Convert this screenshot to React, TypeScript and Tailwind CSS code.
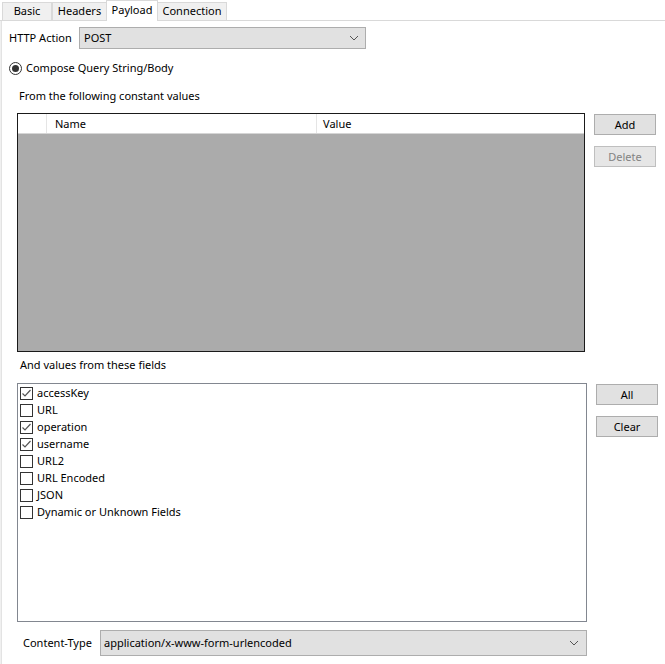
import React, { useState } from 'react';

const fields = [
  { label: 'accessKey', checked: true },
  { label: 'URL', checked: false },
  { label: 'operation', checked: true },
  { label: 'username', checked: true },
  { label: 'URL2', checked: false },
  { label: 'URL Encoded', checked: false },
  { label: 'JSON', checked: false },
  { label: 'Dynamic or Unknown Fields', checked: false },
];

const tabs = [
  { name: 'Basic', w: 'w-[50px]' },
  { name: 'Headers', w: 'w-[55px]' },
  { name: 'Payload', w: 'w-[52px]' },
  { name: 'Connection', w: 'w-[70px]' },
];

function Chevron() {
  return (
    <svg width="10" height="6" viewBox="0 0 10 6" className="shrink-0">
      <path d="M1 1 L5 5 L9 1" fill="none" stroke="#555" strokeWidth="1" />
    </svg>
  );
}

function WinButton({ label, disabled }: { label: string; disabled?: boolean }) {
  return (
    <button
      className={`w-[62px] h-[21px] border text-[11px] leading-none ${
        disabled ? 'text-[#838383] border-[#bfbfbf] bg-[#e6e6e6]' : 'text-black border-[#adadad] bg-[#e1e1e1]'
      }`}
    >
      {label}
    </button>
  );
}

function CheckBox({ checked }: { checked: boolean }) {
  return (
    <span className="w-[13px] h-[13px] border border-[#333] bg-white flex items-center justify-center shrink-0">
      {checked && (
        <svg width="11" height="11" viewBox="0 0 11 11">
          <path d="M1.5 5.5 L4 8 L9.5 2" fill="none" stroke="#555" strokeWidth="1.2" />
        </svg>
      )}
    </span>
  );
}

export default function App() {
  const [active, setActive] = useState('Payload');
  const [items, setItems] = useState(fields);

  return (
    <div
      className="w-[665px] h-[664px] bg-white text-black text-[11px] overflow-hidden flex flex-col"
      style={{ fontFamily: '"Noto Sans", "Open Sans", sans-serif' }}
    >
      {/* Tab strip */}
      <div className="flex items-end h-[20px] pl-[2px]">
        {tabs.map((t) => (
          <div
            key={t.name}
            onClick={() => setActive(t.name)}
            className={
              t.name === active
                ? `${t.w} h-[21px] -mb-[1px] bg-white border-x border-t border-[#d9d9d9] flex justify-center pt-[1px] z-10 -mx-[1px]`
                : `${t.w} h-[18px] bg-[#f0f0f0] border-x border-t border-[#d9d9d9] flex items-center justify-center`
            }
          >
            {t.name}
          </div>
        ))}
      </div>

      {/* Panel */}
      <div className="flex-1 flex border-t border-[#d9d9d9]">
        <div className="w-[2px] bg-[#f0f0f0] border-r border-[#e3e3e3]" />
        <div className="flex-1 flex flex-col pl-[7px]">
          <div className="flex items-center mt-[6px] h-[22px]">
            <span className="w-[70px]">HTTP Action</span>
            <div className="w-[287px] h-[22px] border border-[#adadad] bg-[#e1e1e1] flex items-center justify-between pl-[4px] pr-[6px]">
              <span>POST</span>
              <Chevron />
            </div>
          </div>

          <label className="flex items-center mt-[11px] h-[16px]">
            <span className="w-[13px] h-[13px] rounded-full border border-[#333] bg-white flex items-center justify-center mr-[4px]">
              <span className="w-[7px] h-[7px] rounded-full bg-[#333]" />
            </span>
            Compose Query String/Body
          </label>

          <div className="pl-[10px] mt-[12px] h-[16px] leading-[16px]">From the following constant values</div>

          <div className="flex mt-[9px] pl-[8px]">
            <div className="w-[568px] h-[239px] border border-[#1a1a1a] bg-[#ababab] flex flex-col">
              <div className="h-[20px] bg-white flex border-b border-[#d5d5d5] shrink-0">
                <div className="w-[29px] border-r border-[#e5e5e5]" />
                <div className="w-[270px] border-r border-[#e5e5e5] pl-[8px] flex items-center pt-[2px]">Name</div>
                <div className="flex-1 pl-[6px] flex items-center pt-[2px]">Value</div>
              </div>
            </div>
            <div className="flex flex-col gap-[11px] ml-[9px] mt-[1px]">
              <WinButton label="Add" />
              <WinButton label="Delete" disabled />
            </div>
          </div>

          <div className="pl-[11px] mt-[5px] h-[16px] leading-[16px]">And values from these fields</div>

          <div className="flex mt-[10px] pl-[8px]">
            <div className="w-[570px] h-[239px] border border-[#828790] bg-white pt-[1px] pl-[2px]">
              {items.map((f, i) => (
                <div
                  key={f.label}
                  className="h-[17px] flex items-center gap-[4px]"
                  onClick={() =>
                    setItems(items.map((x, j) => (j === i ? { ...x, checked: !x.checked } : x)))
                  }
                >
                  <CheckBox checked={f.checked} />
                  <span>{f.label}</span>
                </div>
              ))}
            </div>
            <div className="flex flex-col gap-[11px] ml-[9px] mt-[1px]">
              <WinButton label="All" />
              <WinButton label="Clear" />
            </div>
          </div>

          <div className="flex items-center mt-[8px] pl-[14px] h-[26px]">
            <span className="w-[77px]">Content-Type</span>
            <div className="w-[487px] h-[26px] border border-[#adadad] bg-[#e1e1e1] flex items-center justify-between pl-[3px] pr-[7px]">
              <span>application/x-www-form-urlencoded</span>
              <Chevron />
            </div>
          </div>
        </div>
      </div>
    </div>
  );
}
